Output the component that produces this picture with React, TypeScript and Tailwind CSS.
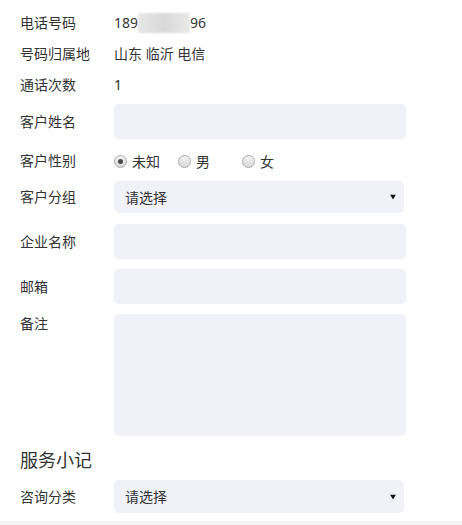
import { useState } from "react";

const font = "font-['Noto_Sans','Noto_Sans_CJK_SC',sans-serif]";

const Arrow = () => (
  <svg width="6" height="5" viewBox="0 0 6 5" className="absolute right-[8px] top-1/2 -translate-y-1/2">
    <path d="M0 0 H6 L3 5 Z" fill="#111" />
  </svg>
);

const Radio = ({ checked, label, onClick }: { checked: boolean; label: string; onClick: () => void }) => (
  <label className="flex items-center cursor-pointer" onClick={onClick}>
    <span className="size-[13px] rounded-full border border-[#a9a9a9] bg-gradient-to-b from-[#f3f3f3] to-[#d9d9d9] flex items-center justify-center">
      {checked && <span className="size-[5px] rounded-full bg-[#4a4a4a]" />}
    </span>
    <span className="ml-[5px]">{label}</span>
  </label>
);

const Row = ({ label, children, top }: { label: string; children: React.ReactNode; top?: boolean }) => (
  <div className={`flex ${top ? "items-start" : "items-center"}`}>
    <div className="w-[94px] shrink-0 leading-[20px]">{label}</div>
    {children}
  </div>
);

export default function App() {
  const [gender, setGender] = useState("未知");
  return (
    <div className={`w-[462px] h-[525px] bg-white text-[#333] text-[14px] ${font} flex flex-col`}>
      <div className="pl-5 pt-[7px]">
        {/* 基本信息 */}
        <Row label="电话号码">
          <div className="h-[31px] flex items-center">
            <span>189</span>
            <span className="inline-block w-[52px] h-[20px] bg-gradient-to-r from-[#e6e6e6] via-[#d9d9d9] to-[#e9e9e9] blur-[1px]" />
            <span>96</span>
          </div>
        </Row>
        <Row label="号码归属地">
          <div className="h-[31px] flex items-center">山东 临沂 电信</div>
        </Row>
        <Row label="通话次数">
          <div className="h-[31px] flex items-center">1</div>
        </Row>

        <div className="mt-[4px]">
          <Row label="客户姓名">
            <input className="w-[292px] h-[35px] rounded-[5px] bg-[#f0f2f7] outline-none px-[11px]" />
          </Row>
        </div>

        <div className="mt-[6px] h-[32px]">
          <Row label="客户性别">
            <div className="h-[32px] flex items-center">
              <div className="w-[64px]"><Radio checked={gender === "未知"} label="未知" onClick={() => setGender("未知")} /></div>
              <div className="w-[64px]"><Radio checked={gender === "男"} label="男" onClick={() => setGender("男")} /></div>
              <Radio checked={gender === "女"} label="女" onClick={() => setGender("女")} />
            </div>
          </Row>
        </div>

        <div className="mt-[4px]">
          <Row label="客户分组">
            <div className="relative w-[290px] h-[32px] rounded-[5px] bg-[#f0f2f7] flex items-center px-[11px]">
              请选择
              <Arrow />
            </div>
          </Row>
        </div>

        <div className="mt-[11px]">
          <Row label="企业名称">
            <input className="w-[292px] h-[35px] rounded-[5px] bg-[#f0f2f7] outline-none px-[11px]" />
          </Row>
        </div>

        <div className="mt-[10px]">
          <Row label="邮箱">
            <input className="w-[292px] h-[35px] rounded-[5px] bg-[#f0f2f7] outline-none px-[11px]" />
          </Row>
        </div>

        <div className="mt-[10px]">
          <Row label="备注" top>
            <textarea className="w-[292px] h-[122px] rounded-[5px] bg-[#f0f2f7] outline-none px-[11px] py-2 resize-none" />
          </Row>
        </div>

        {/* 服务小记 */}
        <div className="mt-[12px] h-[24px] leading-[24px] text-[18px]">服务小记</div>

        <div className="mt-[8px]">
          <Row label="咨询分类">
            <div className="relative w-[290px] h-[33px] rounded-[5px] bg-[#f0f2f7] flex items-center px-[11px]">
              请选择
              <Arrow />
            </div>
          </Row>
        </div>
      </div>
      <div className="mt-auto h-[4px] bg-[#f4f4f4]" />
    </div>
  );
}
